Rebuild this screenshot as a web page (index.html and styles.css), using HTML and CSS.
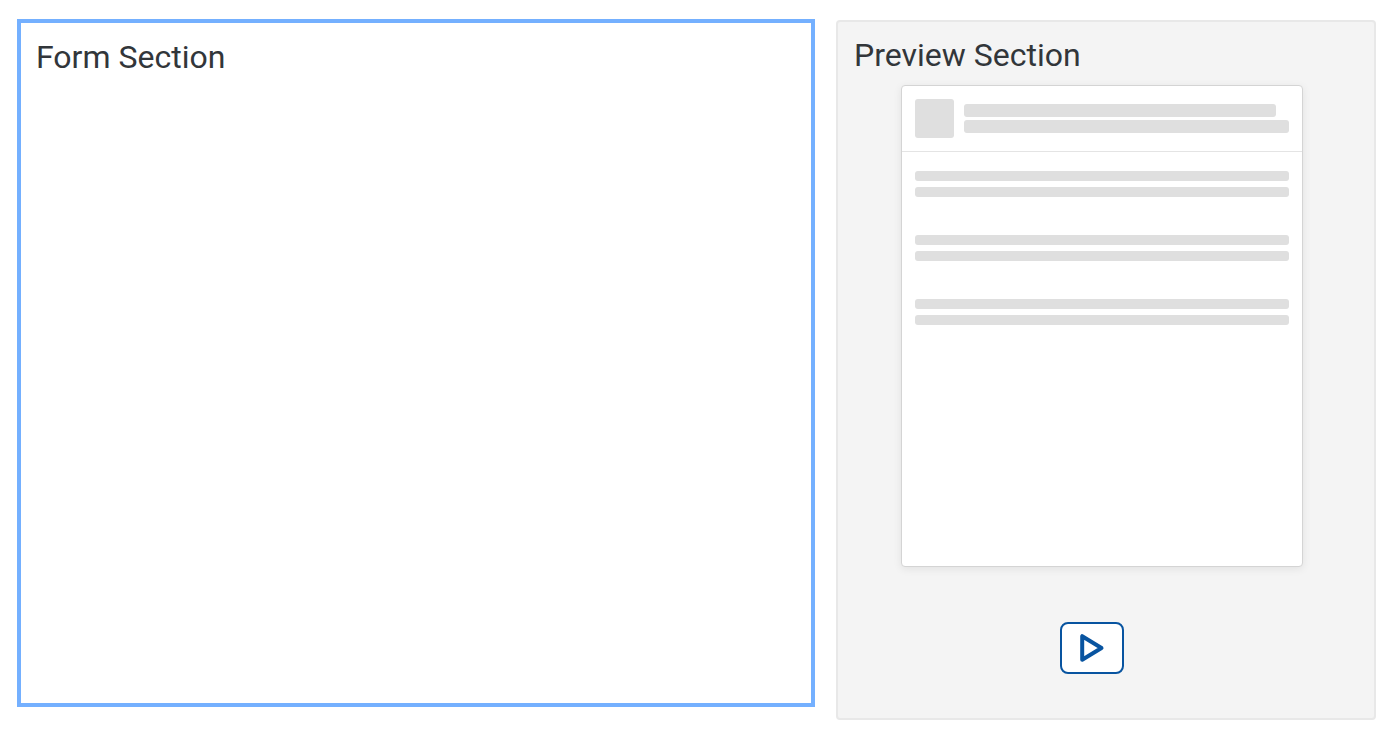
FILE: index.html
```html
<!DOCTYPE html>
<html lang="en">
<head>
<meta charset="utf-8">
<meta name="viewport" content="width=device-width, initial-scale=1">
<title>Form and Preview</title>
<link rel="stylesheet" href="styles.css">
</head>
<body>
<main class="layout">
  <section class="form-section">
    <h2 class="title">Form Section</h2>
  </section>
  <section class="preview-section">
    <h2 class="title">Preview Section</h2>
    <div class="card">
      <div class="card-header">
        <div class="avatar"></div>
        <div class="header-lines">
          <div class="header-line header-line-short"></div>
          <div class="header-line"></div>
        </div>
      </div>
      <div class="card-body">
        <div class="line-group"><div class="line"></div><div class="line"></div></div>
        <div class="line-group"><div class="line"></div><div class="line"></div></div>
        <div class="line-group"><div class="line"></div><div class="line"></div></div>
      </div>
    </div>
    <div class="actions">
      <button class="play-button" type="button" aria-label="Play">
        <svg class="play-icon" viewBox="0 0 32 32" aria-hidden="true"><path d="M6.2 4.2V27.8L25.5 16Z" fill="none" stroke="currentColor" stroke-width="4" stroke-linejoin="round"/></svg>
      </button>
    </div>
  </section>
</main>
</body>
</html>
```
FILE: styles.css
```css
* {
  box-sizing: border-box;
}

body {
  margin: 0;
  background: #fff;
  color: #32363a;
  font-family: Roboto, "Liberation Sans", sans-serif;
}

.layout {
  display: grid;
  grid-template-columns: 798fr 540fr;
  gap: 21px;
  min-height: 100vh;
  padding: 19px 18px 18px 17px;
}

.form-section {
  margin-bottom: 13px;
  padding: 14px 15px;
  border: 4px solid #74b0ff;
}

.preview-section {
  margin-top: 1px;
  padding: 13px 24px 44px 16px;
  border: 2px solid #e8e8e8;
  border-radius: 4px;
  background: #f4f4f4;
}

.title {
  margin: 0;
  font-size: 32px;
  line-height: 40px;
  font-weight: 400;
}

.card {
  width: 402px;
  max-width: 100%;
  min-height: 482px;
  margin: 10px auto 0;
  border: 1px solid #d4d4d4;
  border-radius: 4px;
  background: #fff;
  box-shadow: 0 2px 8px rgba(0, 0, 0, 0.08);
}

.card-header {
  display: flex;
  align-items: center;
  gap: 10px;
  padding: 13px;
  border-bottom: 1px solid #e4e4e4;
}

.avatar {
  flex: none;
  width: 39px;
  height: 39px;
  border-radius: 3px;
  background: #dfdfdf;
}

.header-lines {
  display: grid;
  flex: 1;
  gap: 3px;
}

.header-line {
  height: 13px;
  border-radius: 3px;
  background: #dfdfdf;
}

.header-line-short {
  width: 96%;
}

.card-body {
  display: grid;
  gap: 38px;
  padding: 19px 13px;
}

.line-group {
  display: grid;
  gap: 6px;
}

.line {
  height: 10px;
  border-radius: 3px;
  background: #dfdfdf;
}

.actions {
  display: flex;
  justify-content: center;
  margin-top: 55px;
  padding-right: 20px;
}

.play-button {
  display: flex;
  align-items: center;
  justify-content: center;
  width: 64px;
  height: 52px;
  padding: 0;
  border: 2px solid #0854a0;
  border-radius: 8px;
  background: #fff;
  color: #0854a0;
}

.play-icon {
  width: 32px;
  height: 32px;
}
```
